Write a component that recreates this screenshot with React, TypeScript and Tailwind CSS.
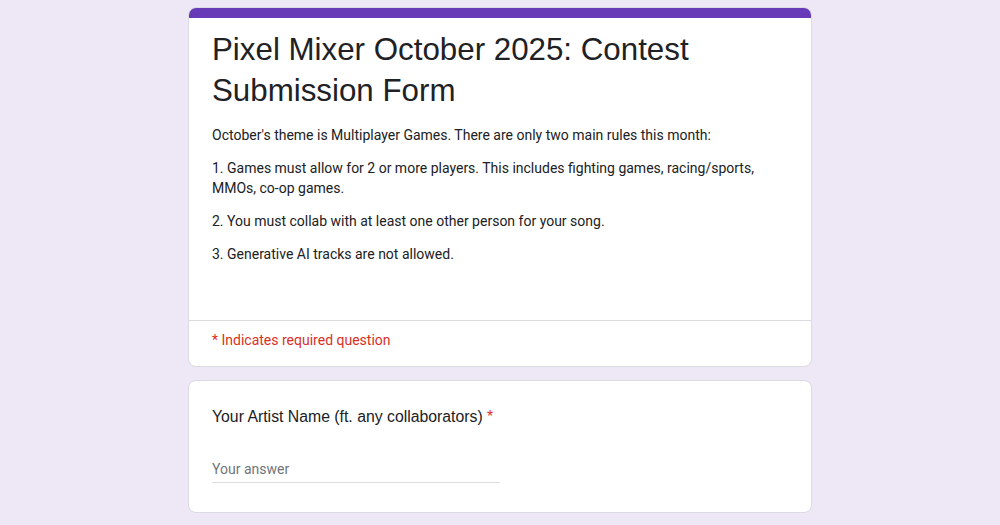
import React from 'react'

const rules = [
  "October's theme is Multiplayer Games. There are only two main rules this month:",
  '1. Games must allow for 2 or more players. This includes fighting games, racing/sports, MMOs, co-op games.',
  '2. You must collab with at least one other person for your song.',
  '3. Generative AI tracks are not allowed.',
]

const HeaderCard = () => {
  return (
    <div className="bg-white rounded-lg border border-[#dadce0] overflow-hidden">
      <div className="h-[10px] bg-[#673ab7]" />
      <div className="px-[23px] pt-[11px] pb-[56px]">
        <h1 className="text-[31.3px] leading-[41px] text-[#202124] font-['Liberation_Sans',Arial,sans-serif]">
          Pixel Mixer October 2025: Contest Submission Form
        </h1>
        <div className="mt-[14px] flex flex-col gap-[13px] text-[14px] leading-[20px] text-[#202124] font-['Roboto',sans-serif]">
          {rules.map((r, idx) => (
            <p key={idx}>{r}</p>
          ))}
        </div>
      </div>
      <div className="border-t border-[#dadce0] px-[23px] pt-[9px] pb-[16px] text-[14px] leading-[20px] text-[#d93025] font-['Roboto',sans-serif]">
        * Indicates required question
      </div>
    </div>
  )
}

const QuestionCard = () => {
  return (
    <div className="bg-white rounded-lg border border-[#dadce0] px-[23px] pt-[24px] pb-[29px]">
      <div className="text-[15.8px] leading-[24px] text-[#202124] font-['Liberation_Sans',Arial,sans-serif]">
        Your Artist Name (ft. any collaborators){' '}
        <span className="text-[#d93025]">*</span>
      </div>
      <div className="mt-[30px] w-[288px] border-b border-[#dadce0] pb-[3px] text-[14px] leading-[20px] text-[#70757a] font-['Roboto',sans-serif]">
        Your answer
      </div>
    </div>
  )
}

export default function App() {
  return (
    <div className="min-h-screen bg-[#ede7f6] pt-[7px]">
      <div className="mx-auto w-[624px] flex flex-col gap-[13px]">
        <HeaderCard />
        <QuestionCard />
      </div>
    </div>
  )
}
